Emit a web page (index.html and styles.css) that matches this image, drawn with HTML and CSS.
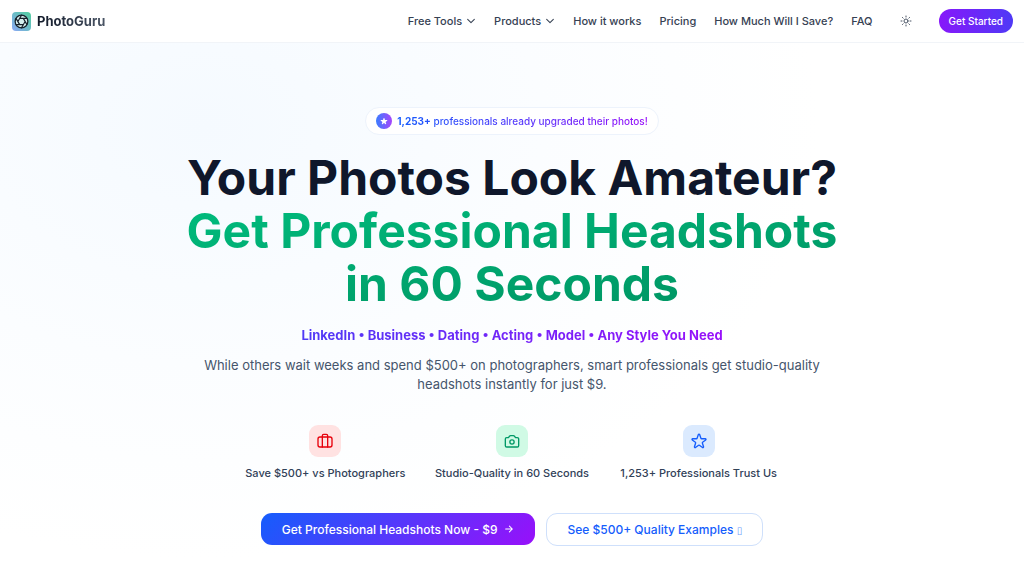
FILE: index.html
```html
<!DOCTYPE html>
<html lang="en">
<head>
  <meta charset="UTF-8">
  <meta name="viewport" content="width=device-width, initial-scale=1.0">
  <title>PhotoGuru</title>
  <link rel="stylesheet" href="styles.css">
</head>
<body>

  <header class="header">
    <a href="#" class="logo">
      <svg class="logo-icon" viewBox="0 0 24 24" aria-hidden="true">
        <defs>
          <linearGradient id="logoBg" x1="1" y1="0" x2="0" y2="1">
            <stop offset="0" stop-color="#4fce9c"/>
            <stop offset="1" stop-color="#8ba8f5"/>
          </linearGradient>
        </defs>
        <rect width="24" height="24" rx="5" fill="url(#logoBg)"/>
        <circle cx="12" cy="12" r="8" fill="#d5efee" stroke="#17212b" stroke-width="1.6"/>
        <g stroke="#17212b" stroke-width="1.5">
          <path d="M14.3 8l4.6 7.9M9.7 8h9.2M7.4 12L12 4.1M9.7 16L5.1 8.1M14.3 16H5.1M16.6 12L12 19.9"/>
        </g>
      </svg>
      <span class="logo-text">PhotoGuru</span>
    </a>

    <nav class="nav">
      <button type="button" class="nav-link">Free Tools
        <svg class="chevron" viewBox="0 0 24 24" aria-hidden="true"><path d="M4 8l8 8 8-8"/></svg>
      </button>
      <button type="button" class="nav-link">Products
        <svg class="chevron" viewBox="0 0 24 24" aria-hidden="true"><path d="M4 8l8 8 8-8"/></svg>
      </button>
      <a href="#" class="nav-link">How it works</a>
      <a href="#" class="nav-link">Pricing</a>
      <a href="#" class="nav-link">How Much Will I Save?</a>
      <a href="#" class="nav-link">FAQ</a>
      <button type="button" class="theme-toggle" aria-label="Toggle theme">
        <svg viewBox="0 0 24 24" aria-hidden="true">
          <circle cx="12" cy="12" r="4"/>
          <path d="M12 2v2M12 20v2M4.9 4.9l1.4 1.4M17.7 17.7l1.4 1.4M2 12h2M20 12h2M6.3 17.7l-1.4 1.4M19.1 4.9l-1.4 1.4"/>
        </svg>
      </button>
      <a href="#" class="btn-start">Get Started</a>
    </nav>
  </header>

  <main class="hero">
    <div class="badge">
      <span class="badge-icon">
        <svg viewBox="0 0 20 20" aria-hidden="true"><path d="M9.05 2.93c.3-.92 1.6-.92 1.9 0l1.52 4.67h4.91c.97 0 1.37 1.24.59 1.81l-3.98 2.89 1.52 4.67c.3.92-.76 1.69-1.54 1.12L10 15.2l-3.97 2.89c-.78.57-1.84-.2-1.54-1.12l1.52-4.67-3.98-2.89c-.78-.57-.38-1.81.59-1.81h4.91z"/></svg>
      </span>
      <span class="badge-text"><strong>1,253+</strong> professionals already upgraded their photos!</span>
    </div>

    <h1 class="title">Your Photos Look Amateur? <span class="title-accent">Get Professional Headshots in 60 Seconds</span></h1>

    <p class="styles-list">LinkedIn • Business • Dating • Acting • Model • Any Style You Need</p>
    <p class="description">While others wait weeks and spend $500+ on photographers, smart professionals get studio-quality headshots instantly for just $9.</p>

    <!-- Benefits -->
    <ul class="features">
      <li class="feature">
        <span class="feature-icon red">
          <svg viewBox="0 0 24 24" aria-hidden="true">
            <rect x="1.5" y="6" width="21" height="15" rx="3"/>
            <path d="M8 21V4a2 2 0 0 1 2-2h4a2 2 0 0 1 2 2v17"/>
          </svg>
        </span>
        <span>Save $500+ vs Photographers</span>
      </li>
      <li class="feature">
        <span class="feature-icon green">
          <svg viewBox="0 0 24 24" aria-hidden="true">
            <path d="M2 9a2 2 0 0 1 2-2h1.6a2 2 0 0 0 1.7-.9l.9-1.2A2 2 0 0 1 9.9 4h4.2a2 2 0 0 1 1.7.9l.9 1.2a2 2 0 0 0 1.7.9H20a2 2 0 0 1 2 2v10a2 2 0 0 1-2 2H4a2 2 0 0 1-2-2z"/>
            <circle cx="12" cy="13.5" r="3.2"/>
          </svg>
        </span>
        <span>Studio-Quality in 60 Seconds</span>
      </li>
      <li class="feature">
        <span class="feature-icon blue">
          <svg viewBox="0 0 24 24" aria-hidden="true">
            <path d="M11.05 2.3c.3-.92 1.6-.92 1.9 0l1.9 5.6c.13.4.5.7.95.7h5.7c.97 0 1.37 1.24.59 1.81l-4.7 3.5c-.35.25-.5.7-.36 1.11l1.8 5.7c.3.92-.76 1.69-1.54 1.12l-4.7-3.5c-.35-.25-.83-.25-1.18 0l-4.7 3.5c-.78.57-1.84-.2-1.54-1.12l1.8-5.7c.14-.41-.01-.86-.36-1.11l-4.7-3.5c-.78-.57-.38-1.81.59-1.81h5.7c.45 0 .82-.3.95-.7z"/>
          </svg>
        </span>
        <span>1,253+ Professionals Trust Us</span>
      </li>
    </ul>

    <div class="actions">
      <a href="#" class="btn btn-primary">Get Professional Headshots Now - $9
        <svg viewBox="0 0 24 24" aria-hidden="true"><path d="M4 12h16M13 5l7 7-7 7"/></svg>
      </a>
      <a href="#" class="btn btn-secondary"><span>See $500+ Quality Examples <span class="btn-glyph">▯</span></span></a>
    </div>
  </main>

</body>
</html>
```
FILE: styles.css
```css
* {
  box-sizing: border-box;
}
body {
  margin: 0;
  min-height: 100vh;
  font-family: Inter, "DejaVu Sans", sans-serif;
  color: #0f172b;
  background: radial-gradient(ellipse 60% 75% at 20% 22%, #f5faff 0%, #fbfdff 55%, #ffffff 100%);
}
a {
  text-decoration: none;
}
button {
  font-family: inherit;
  border: 0;
  padding: 0;
  background: none;
  cursor: pointer;
}
svg {
  fill: none;
  stroke: currentColor;
  stroke-width: 2;
  stroke-linecap: round;
  stroke-linejoin: round;
}

/* Header */
.header {
  display: flex;
  align-items: center;
  justify-content: space-between;
  height: 43px;
  padding: 0 11px 0 12px;
  background: #fff;
  border-bottom: 1px solid #f1f4f8;
}
.logo {
  display: flex;
  align-items: center;
  gap: 6px;
}
.logo-icon {
  width: 19px;
  height: 19px;
  stroke: none;
}
.logo-text {
  font-size: 13px;
  font-weight: 700;
  background: linear-gradient(90deg, #101828, #4a5565);
  background-clip: text;
  color: transparent;
}
.nav {
  display: flex;
  align-items: center;
  gap: 18px;
}
.nav-link {
  display: flex;
  align-items: center;
  gap: 4px;
  font-size: 11px;
  font-weight: 500;
  color: #364153;
}
.chevron {
  width: 10px;
  height: 10px;
  stroke-width: 2.5;
}
.theme-toggle {
  display: flex;
  padding: 9px;
  color: #4a5565;
}
.theme-toggle svg {
  width: 12px;
  height: 12px;
}
.btn-start {
  padding: 6px 10px;
  border-radius: 12px;
  font-size: 10px;
  line-height: 12px;
  font-weight: 500;
  color: #fff;
  background: linear-gradient(90deg, #8718fa, #4f39f6);
}

/* Hero */
.hero {
  display: flex;
  flex-direction: column;
  align-items: center;
  padding: 64px 16px 30px;
  text-align: center;
}
.badge {
  display: flex;
  align-items: center;
  gap: 5px;
  padding: 5px 10px;
  border: 1px solid #edf3fc;
  border-radius: 14px;
  background: #fff;
}
.badge-icon {
  display: flex;
  align-items: center;
  justify-content: center;
  width: 16px;
  height: 16px;
  border-radius: 50%;
  background: linear-gradient(90deg, #3b7dff, #a646fb);
}
.badge-icon svg {
  width: 8px;
  height: 8px;
  fill: #fff;
  stroke: none;
}
.badge-text {
  font-size: 10px;
  line-height: 16px;
  font-weight: 500;
  background: linear-gradient(90deg, #155dfc, #9810fa);
  background-clip: text;
  color: transparent;
}
.badge-text strong {
  font-weight: 700;
}
.title {
  max-width: 680px;
  margin: 16px 0 0;
  font-size: 48px;
  line-height: 53px;
  font-weight: 700;
}
.title-accent {
  display: block;
  background: linear-gradient(to bottom right, #00bc7d, #009966 80%);
  background-clip: text;
  color: transparent;
}
.styles-list {
  margin: 16px 0 0;
  font-size: 13px;
  line-height: 19px;
  font-weight: 700;
  background: linear-gradient(90deg, #4f39f6, #9810fa);
  background-clip: text;
  color: transparent;
}
.description {
  max-width: 680px;
  margin: 11px 0 0;
  font-size: 13px;
  line-height: 19px;
  color: #45556c;
}
.features {
  display: grid;
  grid-template-columns: repeat(3, 1fr);
  width: 100%;
  max-width: 560px;
  margin: 31px 0 0;
  padding: 0;
  list-style: none;
}
.feature {
  display: flex;
  flex-direction: column;
  align-items: center;
  gap: 8px;
  font-size: 11px;
  line-height: 16px;
  font-weight: 500;
  color: #314158;
}
.feature-icon {
  display: flex;
  align-items: center;
  justify-content: center;
  width: 32px;
  height: 32px;
  border-radius: 9px;
}
.feature-icon svg {
  width: 16px;
  height: 16px;
}
.red {
  color: #e7000b;
  background: #ffe2e2;
}
.green {
  color: #009966;
  background: #d0fae5;
}
.blue {
  color: #155dfc;
  background: #dbeafe;
}

/* Buttons */
.actions {
  display: flex;
  gap: 11px;
  margin-top: 32px;
}
.btn {
  display: flex;
  align-items: center;
  gap: 7px;
  height: 32px;
  padding: 0 21px;
  border-radius: 11px;
  font-size: 12px;
  font-weight: 500;
}
.btn svg {
  width: 10px;
  height: 10px;
  stroke-width: 2.5;
}
.btn-primary {
  color: #fff;
  background: linear-gradient(135deg, #155dfc, #9810fa);
}
.btn-secondary {
  height: 33px;
  padding: 0 20px;
  color: #155dfc;
  background: #fff;
  border: 1px solid #cfe0fb;
}
.btn-glyph {
  font-size: 10px;
  color: #6f9dfb;
}
```
